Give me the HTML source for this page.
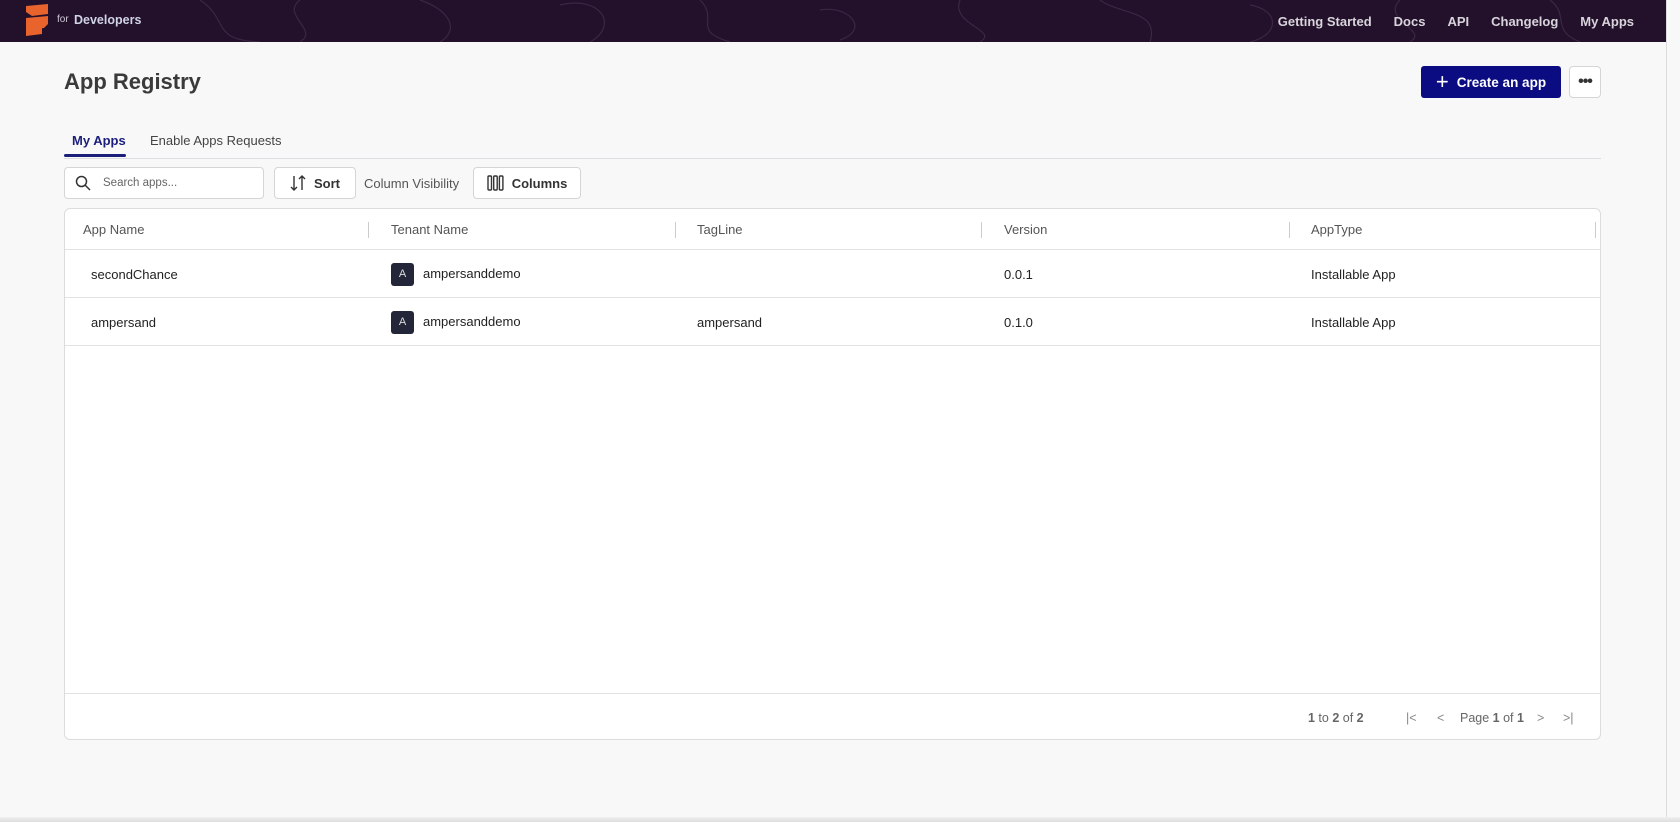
<!DOCTYPE html>
<html><head><meta charset="utf-8"><style>
*{box-sizing:border-box;margin:0;padding:0}
body{width:1680px;height:822px;overflow:hidden;background:#f8f8f9;font-family:"Liberation Sans",sans-serif;color:#333;position:relative}
.hdr{position:absolute;left:0;top:0;width:1666px;height:42px;background:#23112b;overflow:hidden}
.nav{position:absolute;top:0;height:42px;display:flex;align-items:center;gap:22px;right:32px;color:#d8d4dc;font-size:13px;font-weight:bold}
.edge{position:absolute;left:1666px;top:0;width:1px;height:822px;background:#dcdcdc}
.abs{position:absolute}
.btn{position:absolute;border:1px solid #d5d5d8;background:#fff;border-radius:4px;display:flex;align-items:center;justify-content:center;font-size:13px;font-weight:bold;color:#333}
.tbl{position:absolute;left:64px;top:208px;width:1537px;height:532px;background:#fff;border:1px solid #dcdcdf;border-radius:6px}
.hl{position:absolute;left:0;width:100%;height:1px;background:#e2e2e5}
.th{position:absolute;top:13px;font-size:13px;color:#555}
.sep{position:absolute;top:13px;width:1px;height:16px;background:#ccc}
.td{position:absolute;font-size:13px;color:#222}
.av{display:inline-block;width:23px;height:23px;background:#232638;border-radius:3px;color:#ddd;font-size:11px;text-align:center;line-height:23px;vertical-align:middle;margin-right:9px}
.pg{position:absolute;top:711px;font-size:12.5px;color:#666}
</style></head><body>
<div class="hdr">
<svg width="1666" height="42" style="position:absolute;left:0;top:0" fill="none" stroke="#3a2645" stroke-width="1.2">
<path d="M200 0c30 20 10 40 60 42M300 0c-20 15 20 30 0 42M420 0c30 10 40 30 20 42M560 5c40-10 60 20 30 37M700 0c20 20-10 30 30 42M820 10c30-5 50 20 20 30M960 0c-10 25 40 30 20 42M1100 0c20 15 60 10 50 42M1250 5c30 5 30 30 0 37M1400 0c-20 20 30 30 10 42M1550 0c20 15 0 30 30 42"/>
</svg>
<svg class="abs" style="left:22px;top:4px" width="28" height="32"><path d="M4 2L26 0V10L10 12L4 8Z M4 14L26 12V20L22 24L4 26Z M4 26L20 24V30L4 32Z" fill="#e8642c"/></svg>
<div class="abs" style="left:57px;top:14px;font-size:10px;color:#cfc8d6">for</div>
<div class="abs" style="left:74px;top:13px;font-size:12.5px;font-weight:bold;color:#cfd3e6">Developers</div>
<div class="nav"><span>Getting Started</span><span>Docs</span><span>API</span><span>Changelog</span><span>My Apps</span></div>
</div>
<div class="edge"></div>
<div class="abs" style="left:64px;top:69px;font-size:22px;font-weight:bold;color:#3a3a3a">App Registry</div>
<div class="abs" style="left:1421px;top:66px;width:140px;height:32px;background:#0c0c82;border-radius:3px;color:#fff;font-size:13.5px;font-weight:bold;display:flex;align-items:center;justify-content:center;gap:8px"><span style="font-size:22px;font-weight:normal;line-height:1">+</span>Create an app</div>
<div class="btn" style="left:1569px;top:66px;width:32px;height:32px;font-size:16px;letter-spacing:-1px">•••</div>
<div class="abs" style="left:72px;top:133px;font-size:13px;font-weight:bold;color:#1b1f7a">My Apps</div>
<div class="abs" style="left:150px;top:133px;font-size:13px;color:#444">Enable Apps Requests</div>
<div class="abs" style="left:64px;top:158px;width:1537px;height:1px;background:#dedee2"></div>
<div class="abs" style="left:64px;top:154px;width:62px;height:3px;background:#1b1f7a;border-radius:2px"></div>
<div class="btn" style="left:64px;top:167px;width:200px;height:32px;justify-content:flex-start;padding-left:10px;font-weight:normal;font-size:11.5px;color:#666">
<svg width="16" height="16" style="margin-right:12px"><circle cx="6.5" cy="6.5" r="5" fill="none" stroke="#333" stroke-width="1.5"/><path d="M10 10L15 15" stroke="#333" stroke-width="1.5"/></svg>Search apps...</div>
<div class="btn" style="left:274px;top:167px;width:82px;height:32px;gap:8px"><svg width="16" height="16" fill="none" stroke="#333" stroke-width="1.4"><path d="M4 1V15M1 12L4 15L7 12M12 15V1M9 4L12 1L15 4"/></svg>Sort</div>
<div class="abs" style="left:364px;top:176px;font-size:13px;color:#555">Column Visibility</div>
<div class="btn" style="left:473px;top:167px;width:108px;height:32px;gap:8px"><svg width="17" height="16" fill="none" stroke="#333" stroke-width="1.4"><rect x="1" y="1" width="3.5" height="14" rx="1"/><rect x="6.7" y="1" width="3.5" height="14" rx="1"/><rect x="12.4" y="1" width="3.5" height="14" rx="1"/></svg>Columns</div>
<div class="tbl">
<div class="th" style="left:18px">App Name</div><div class="sep" style="left:303px"></div>
<div class="th" style="left:326px">Tenant Name</div><div class="sep" style="left:610px"></div>
<div class="th" style="left:632px">TagLine</div><div class="sep" style="left:916px"></div>
<div class="th" style="left:939px">Version</div><div class="sep" style="left:1224px"></div>
<div class="th" style="left:1246px">AppType</div><div class="sep" style="left:1530px"></div>
<div class="hl" style="top:40px"></div>
<div class="td" style="left:26px;top:58px">secondChance</div>
<div class="td" style="left:326px;top:54px"><span class="av">A</span>ampersanddemo</div>
<div class="td" style="left:939px;top:58px">0.0.1</div>
<div class="td" style="left:1246px;top:58px">Installable App</div>
<div class="hl" style="top:88px"></div>
<div class="td" style="left:26px;top:106px">ampersand</div>
<div class="td" style="left:326px;top:102px"><span class="av">A</span>ampersanddemo</div>
<div class="td" style="left:632px;top:106px">ampersand</div>
<div class="td" style="left:939px;top:106px">0.1.0</div>
<div class="td" style="left:1246px;top:106px">Installable App</div>
<div class="hl" style="top:136px"></div>
<div class="hl" style="top:484px"></div>
</div>
<div class="pg" style="left:1308px"><b>1</b> to <b>2</b> of <b>2</b></div>
<div class="pg" style="left:1406px;color:#888">|&lt;</div>
<div class="pg" style="left:1437px;color:#888">&lt;</div>
<div class="pg" style="left:1460px">Page <b>1</b> of <b>1</b></div>
<div class="pg" style="left:1537px;color:#888">&gt;</div>
<div class="pg" style="left:1563px;color:#888">&gt;|</div>
<div class="abs" style="left:0;top:817px;width:1680px;height:5px;background:linear-gradient(#f0f0f0,#ddd)"></div>
</body></html>
